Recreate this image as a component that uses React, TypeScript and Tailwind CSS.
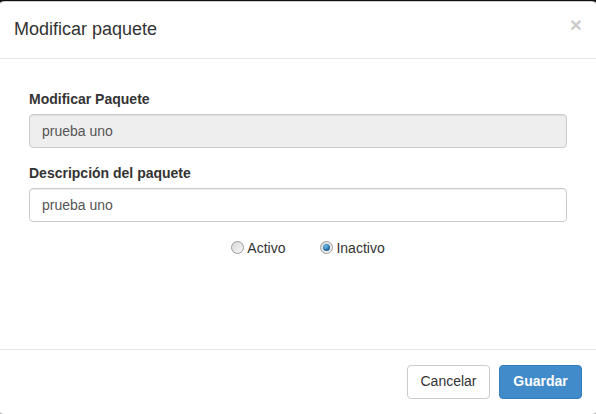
import React from "react";

const font = { fontFamily: '"Liberation Sans", Arial, sans-serif' };

function Radio({ checked, label }: { checked: boolean; label: string }) {
  return (
    <label className="flex items-center text-[14px] leading-5 text-[#333]">
      <span className="mr-[3px] flex h-[13px] w-[13px] items-center justify-center rounded-full border border-[#9b9b9b] bg-gradient-to-br from-[#d9d9d9] to-[#f7f7f7]">
        {checked && (
          <span className="h-[7px] w-[7px] rounded-full bg-[radial-gradient(circle_at_40%_35%,#6cc0f0,#1d5f92_70%,#163f63)]" />
        )}
      </span>
      {label}
    </label>
  );
}

export default function App() {
  return (
    <div className="h-[414px] w-[596px] overflow-hidden bg-[#111]" style={font}>
      <div className="ml-[-2px] mt-[1px] w-[600px] rounded-[6px] border border-black/20 bg-white">
        {/* Header */}
        <div className="flex items-start justify-between border-b border-[#e5e5e5] p-[15px]">
          <h4 className="text-[18px] leading-[25.7px] text-[#333]">Modificar paquete</h4>
          <button className="mt-[-3px] text-[21px] font-bold leading-[21px] text-black opacity-20">
            ×
          </button>
        </div>

        {/* Body */}
        <div className="px-[30px] pb-[91px] pt-[30px]">
          <div className="mb-[15px]">
            <label className="mb-[5px] block text-[14px] font-bold leading-5 text-[#333]">
              Modificar Paquete
            </label>
            <input
              readOnly
              value="prueba uno"
              className="block h-[34px] w-full rounded-[4px] border border-[#ccc] bg-[#eee] px-3 text-[14px] text-[#555] shadow-[inset_0_1px_1px_rgba(0,0,0,0.075)] outline-none"
            />
          </div>
          <div>
            <label className="mb-[5px] block text-[14px] font-bold leading-5 text-[#333]">
              Descripción del paquete
            </label>
            <input
              defaultValue="prueba uno"
              className="block h-[34px] w-full rounded-[4px] border border-[#ccc] bg-white px-3 text-[14px] text-[#555] shadow-[inset_0_1px_1px_rgba(0,0,0,0.075)] outline-none"
            />
          </div>
          <div className="mt-[16px] flex justify-center gap-[35px] pl-[20px]">
            <Radio checked={false} label="Activo" />
            <Radio checked label="Inactivo" />
          </div>
        </div>

        {/* Footer */}
        <div className="flex justify-end gap-[9px] border-t border-[#e5e5e5] p-[15px]">
          <button className="h-[34px] w-[83px] rounded-[4px] border border-[#ccc] bg-white text-[14px] text-[#333]">
            Cancelar
          </button>
          <button className="h-[34px] w-[83px] rounded-[4px] border border-[#357ebd] bg-[#428bca] text-[14px] font-bold text-white">
            Guardar
          </button>
        </div>
      </div>
    </div>
  );
}
